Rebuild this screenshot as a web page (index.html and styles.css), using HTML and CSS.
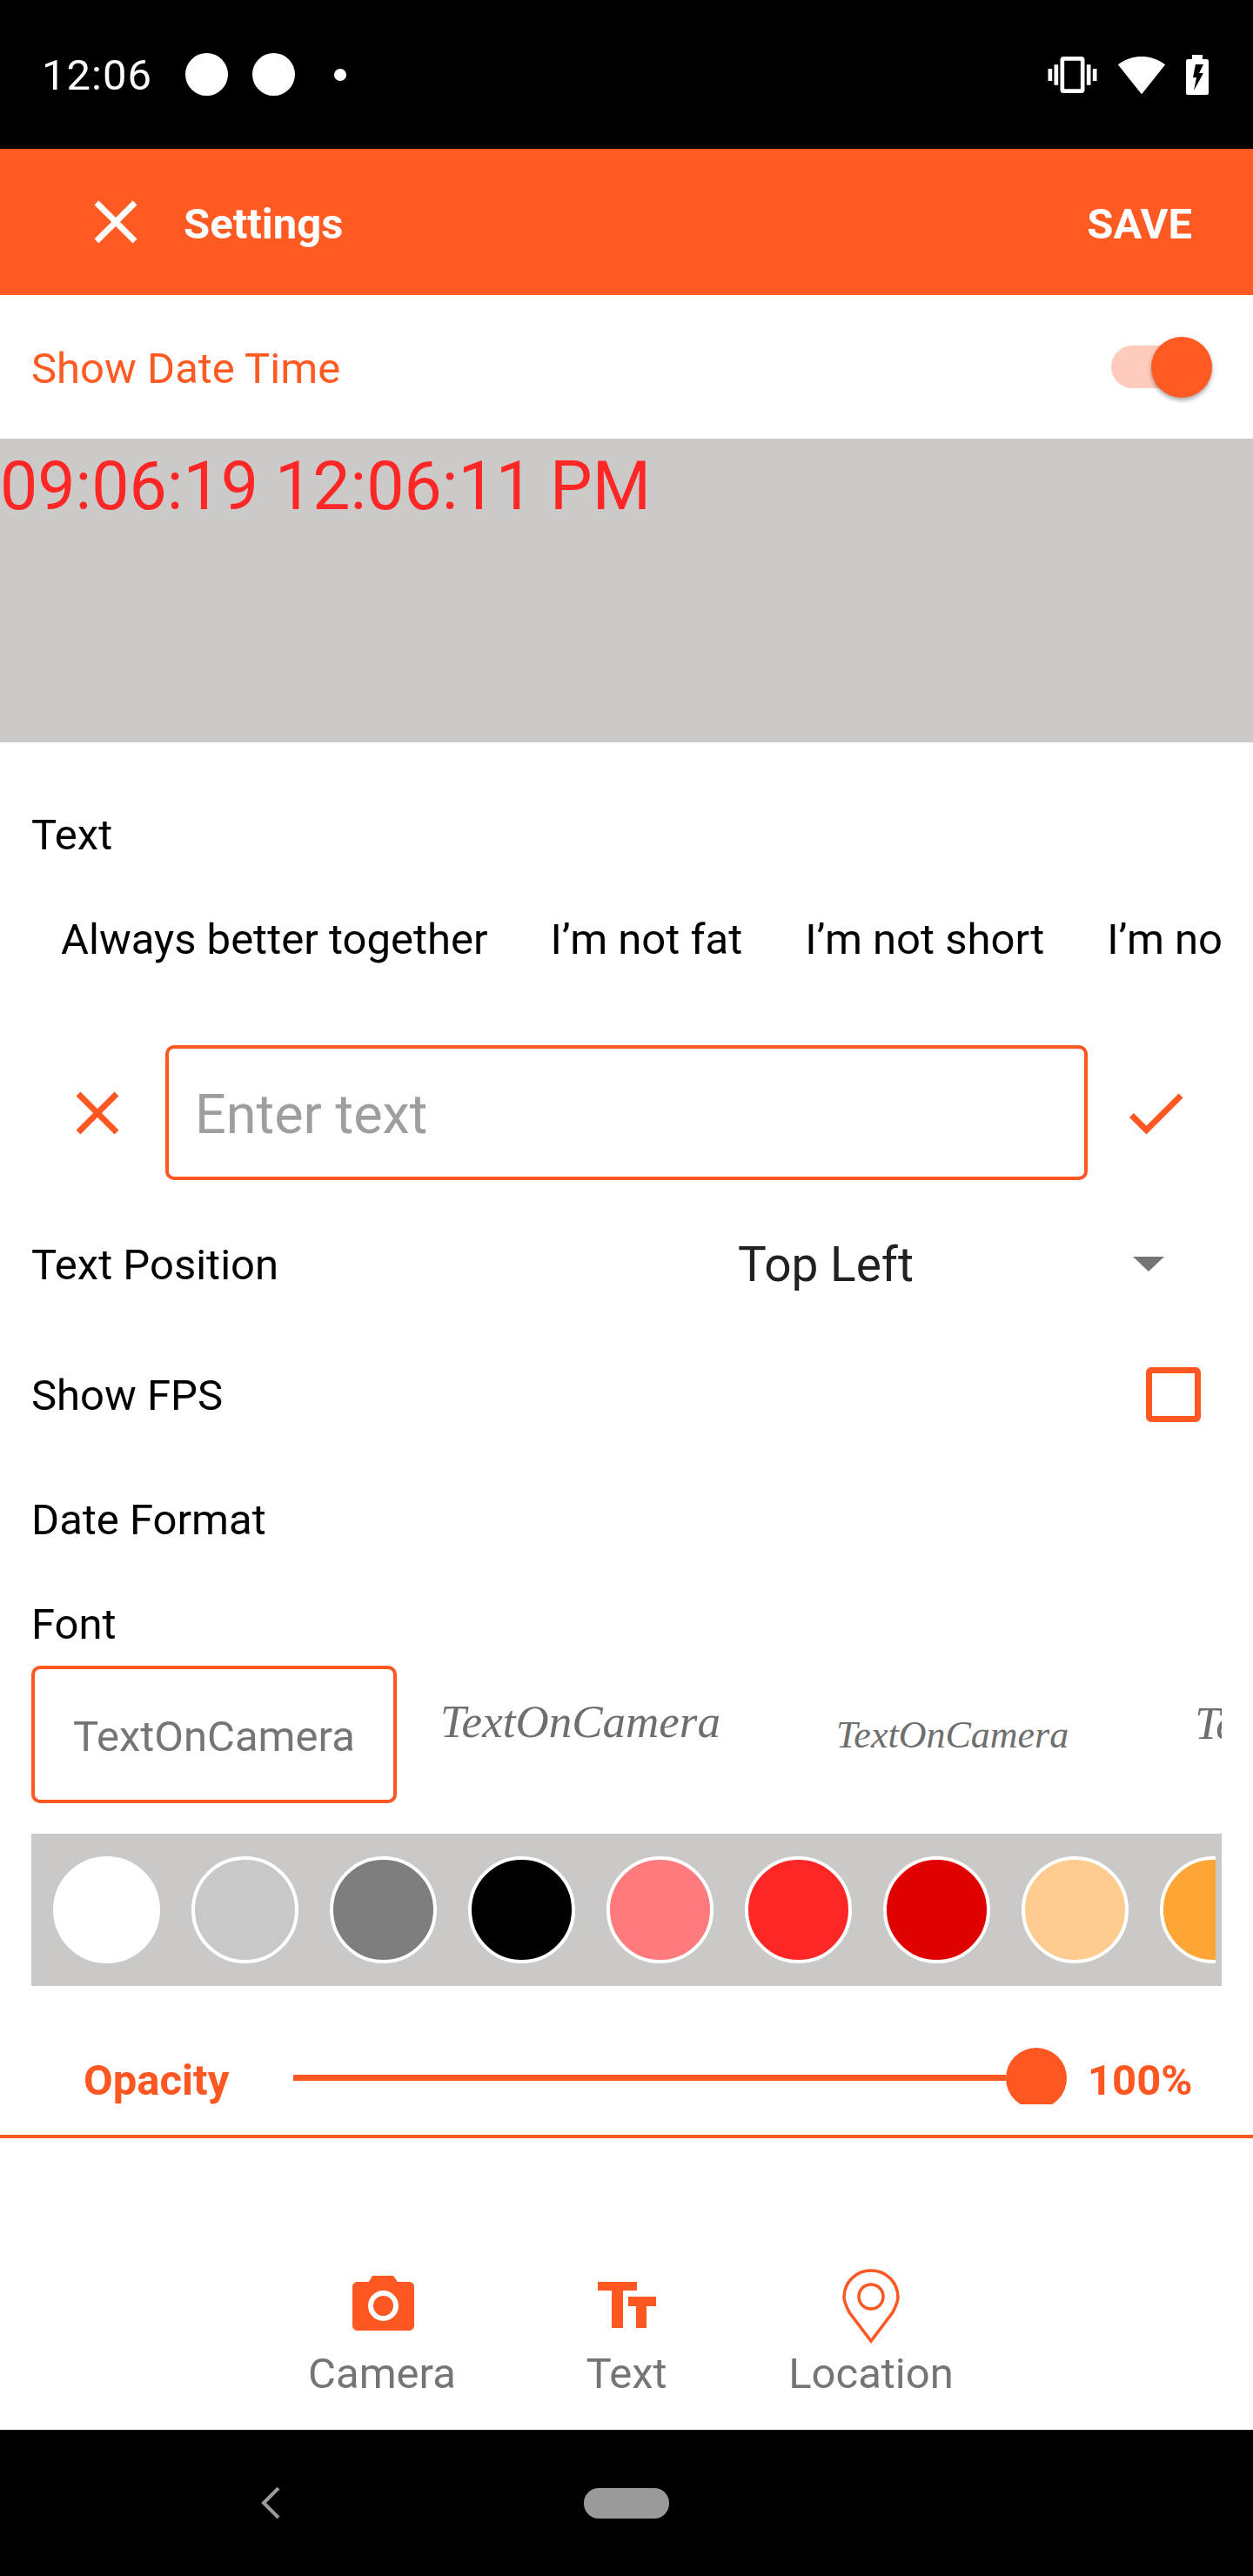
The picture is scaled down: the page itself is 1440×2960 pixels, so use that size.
FILE: index.html
```html
<!DOCTYPE html>
<html lang="en">

  <head>
    <meta charset="UTF-8">
    <meta name="viewport" content="width=device-width, initial-scale=1.0">
    <title>Settings</title>
    <link rel="stylesheet" href="styles.css">
  </head>

  <body>
    <div class="status-bar">
      <span class="clock">12:06</span>
      <span class="dot dot-first"></span>
      <span class="dot dot-second"></span>
      <span class="dot-small"></span>
      <div class="status-icons">
        <svg class="icon-vibrate" viewBox="0 0 24 24" fill="#fff"><path d="M0 15h2V9H0v6zm3 2h2V7H3v10zm19-8v6h2V9h-2zm-3 8h2V7h-2v10zM16.500 3h-9C6.670 3 6 3.670 6 4.500v15c0 .83.670 1.500 1.500 1.500h9c.83 0 1.500-.670 1.500-1.500v-15c0-.83-.670-1.500-1.500-1.500zM16 19H8V5h8v14z"/></svg>
        <svg class="icon-wifi" viewBox="0 0 24 24" fill="#fff"><path d="M12.010 21.490L23.640 7c-.45-.34-4.930-4-11.640-4C5.280 3 .81 6.660.36 7l11.630 14.490.01.01.01-.01z"/></svg>
        <svg class="icon-battery" viewBox="0 0 26 46" fill="#fff"><path fill-rule="evenodd" d="M7 0h12v5h5c1 0 2 1 2 2v37c0 1-1 2-2 2H2c-1 0-2-1-2-2V7c0-1 1-2 2-2h5zM11 11l-3 15h4l-3 15 11-20h-5l5-10z"/></svg>
      </div>
    </div>

    <div class="app-bar">
      <svg class="icon-close" viewBox="0 0 24 24" fill="#fff"><path d="M19 6.410L17.590 5 12 10.590 6.410 5 5 6.410 10.590 12 5 17.590 6.410 19 12 13.410 17.590 19 19 17.590 13.410 12z"/></svg>
      <span class="app-title">Settings</span>
      <span class="app-save">SAVE</span>
    </div>

    <div class="date-row">
      <span class="date-label">Show Date Time</span>
      <div class="switch"><span class="switch-thumb"></span></div>
    </div>

    <div class="preview">09:06:19 12:06:11 PM</div>

    <div class="form">
      <div class="field-label text-label">Text</div>
      <div class="chips">
        <span class="chip">Always better together</span>
        <span class="chip">I’m not fat</span>
        <span class="chip">I’m not short</span>
        <span class="chip">I’m not</span>
      </div>

      <div class="input-row">
        <svg class="icon-action" viewBox="0 0 24 24" fill="#ff5722"><path d="M19 6.410L17.590 5 12 10.590 6.410 5 5 6.410 10.590 12 5 17.590 6.410 19 12 13.410 17.590 19 19 17.590 13.410 12z"/></svg>
        <input class="text-input" type="text" placeholder="Enter text">
        <svg class="icon-action" viewBox="0 0 24 24" fill="#ff5722"><path d="M9 16.170L4.830 12l-1.420 1.410L9 19 21 7l-1.410-1.410z"/></svg>
      </div>

      <div class="position-row">
        <span class="row-label">Text Position</span>
        <div class="select">
          <span class="select-value">Top Left</span>
          <span class="select-arrow"></span>
        </div>
      </div>

      <div class="fps-row">
        <span class="row-label">Show FPS</span>
        <span class="checkbox"></span>
      </div>

      <div class="field-label date-format">Date Format</div>
      <div class="field-label font-label">Font</div>

      <div class="font-list">
        <div class="font-selected">TextOnCamera</div>
        <div class="font-option font-a">TextOnCamera</div>
        <div class="font-option font-b">TextOnCamera</div>
        <div class="font-option font-c">TextOnCamera</div>
      </div>

      <div class="color-bar">
        <div class="color-track">
          <span class="swatch swatch-white"></span>
          <span class="swatch swatch-silver"></span>
          <span class="swatch swatch-gray"></span>
          <span class="swatch swatch-black"></span>
          <span class="swatch swatch-pink"></span>
          <span class="swatch swatch-red"></span>
          <span class="swatch swatch-dark-red"></span>
          <span class="swatch swatch-peach"></span>
          <span class="swatch swatch-orange"></span>
        </div>
      </div>
    </div>

    <div class="opacity-row">
      <span class="opacity-label">Opacity</span>
      <div class="slider">
        <span class="slider-track"></span>
        <span class="slider-thumb"></span>
      </div>
      <span class="opacity-value">100%</span>
    </div>

    <div class="tabs">
      <div class="tab">
        <div class="tab-icon">
          <svg class="icon-camera" viewBox="0 0 71 63"><path fill="#ff5722" d="M23 0h24l5 7h13c3.500 0 6 2.500 6 6v44c0 3.500-2.500 6-6 6H6c-3.500 0-6-2.500-6-6V13c0-3.500 2.500-6 6-6h13z"/><circle cx="35.500" cy="34.500" r="14.500" fill="none" stroke="#fff" stroke-width="6"/></svg>
        </div>
        <span class="tab-label">Camera</span>
      </div>
      <div class="tab">
        <div class="tab-icon">
          <svg class="icon-text" viewBox="0 0 67 53" fill="#ff5722"><path d="M0 0h45v10H29v43H16V10H0z"/><path d="M35 17h32v11H56v25H44V28h-9z"/></svg>
        </div>
        <span class="tab-label">Text</span>
      </div>
      <div class="tab">
        <div class="tab-icon">
          <svg class="icon-pin" viewBox="0 0 66 86" fill="none" stroke="#ff5722" stroke-width="3.500"><path d="M33 83L8 50C4 42 2 38 2 33C2 15 16 2 33 2C50 2 64 15 64 33C64 38 62 42 58 50Z"/><circle cx="33" cy="32" r="14"/></svg>
        </div>
        <span class="tab-label">Location</span>
      </div>
    </div>

    <div class="nav-bar">
      <svg class="nav-back" viewBox="0 0 24 36" fill="none" stroke="#9a9a9a" stroke-width="4"><path d="M21 1L4 18l17 17"/></svg>
      <span class="nav-home"></span>
    </div>
  </body>

</html>
```

FILE: styles.css
```css
* {
  box-sizing: border-box;
}

body {
  margin: 0;
  width: 1440px;
  height: 2960px;
  overflow: hidden;
  background: white;
  font-family: Roboto, Arial, sans-serif;
  font-size: 49px;
  color: black;
}

svg {
  display: block;
  flex: none;
}

.status-bar {
  height: 171px;
  background: black;
  color: white;
  display: flex;
  align-items: center;
  padding: 0 51px 0 48px;
}

.clock {
  width: 165px;
  padding-top: 2px;
  letter-spacing: 1px;
}

.dot {
  width: 49px;
  height: 49px;
  border-radius: 50%;
  background: white;
}

.dot-second {
  margin-left: 28px;
}

.dot-small {
  width: 14px;
  height: 14px;
  margin-left: 45px;
  border-radius: 50%;
  background: white;
}

.status-icons {
  margin-left: auto;
  display: flex;
  align-items: center;
  gap: 23px;
}

.icon-vibrate {
  width: 57px;
  height: 56px;
}

.icon-wifi {
  width: 56px;
  height: 56px;
}

.icon-battery {
  width: 26px;
  height: 46px;
}

.app-bar {
  height: 168px;
  background: #ff5a22;
  color: white;
  font-weight: bold;
  display: flex;
  align-items: center;
  padding: 0 70px 0 91px;
}

.icon-close {
  width: 84px;
  height: 84px;
}

.app-title {
  margin-left: 36px;
  padding-top: 4px;
}

.app-save {
  margin-left: auto;
  padding-top: 4px;
}

.date-row {
  height: 165px;
  display: flex;
  align-items: center;
  justify-content: space-between;
  padding: 0 47px 0 36px;
}

.date-label {
  padding-top: 4px;
  color: #ff5a22;
}

.switch {
  position: relative;
  width: 116px;
  height: 49px;
  border-radius: 25px;
  background: #ffccbb;
}

.switch-thumb {
  position: absolute;
  right: 0;
  top: -10px;
  width: 70px;
  height: 70px;
  border-radius: 50%;
  background: #ff5a22;
  box-shadow: 0 3px 5px rgba(0, 0, 0, 0.35);
}

.preview {
  height: 349px;
  background: #cbcac8;
  color: #ff2626;
  font-size: 77px;
  line-height: 90px;
  padding-top: 10px;
}

.form {
  padding: 0 36px;
}

.field-label {
  line-height: 66px;
}

.row-label {
  padding-top: 2px;
}

.text-label {
  margin-top: 74px;
}

.chips {
  height: 130px;
  margin-top: 19px;
  padding: 4px 0 0 34px;
  display: flex;
  align-items: center;
  gap: 72px;
  overflow: hidden;
  white-space: nowrap;
}

.chip {
  flex: none;
}

.input-row {
  height: 155px;
  margin-top: 59px;
  padding-left: 34px;
  display: flex;
  align-items: center;
  gap: 36px;
}

.icon-action {
  width: 84px;
  height: 84px;
}

.text-input {
  width: 1060px;
  height: 155px;
  padding: 4px 30px 0;
  border: 4px solid #ff5722;
  border-radius: 10px;
  outline: none;
  font-family: Roboto, Arial, sans-serif;
  font-size: 63px;
}

.text-input::placeholder {
  color: #9e9e9e;
  opacity: 1;
}

.position-row {
  height: 100px;
  margin-top: 46px;
  display: flex;
  align-items: center;
  justify-content: space-between;
}

.select {
  width: 556px;
  padding-right: 66px;
  display: flex;
  align-items: center;
  justify-content: space-between;
}

.select-value {
  padding-top: 2px;
  font-size: 55px;
  color: #212121;
}

.select-arrow {
  width: 0;
  height: 0;
  border-left: 18px solid transparent;
  border-right: 18px solid transparent;
  border-top: 17px solid #757575;
}

.fps-row {
  height: 100px;
  margin-top: 50px;
  padding-right: 24px;
  display: flex;
  align-items: center;
  justify-content: space-between;
}

.checkbox {
  width: 63px;
  height: 63px;
  border: 7px solid #ff5722;
  border-radius: 6px;
}

.date-format {
  margin-top: 62px;
}

.font-label {
  margin-top: 54px;
}

.font-list {
  height: 158px;
  margin-top: 14px;
  display: flex;
  align-items: center;
  overflow: hidden;
  white-space: nowrap;
}

.font-selected {
  flex: none;
  width: 420px;
  height: 158px;
  padding-top: 4px;
  border: 4px solid #ff5722;
  border-radius: 10px;
  color: #757575;
  display: flex;
  align-items: center;
  justify-content: center;
}

.font-option {
  flex: none;
  color: #6e6e6e;
  font-family: "Liberation Serif", serif;
  font-style: italic;
}

.font-a {
  margin-left: 50px;
  padding-bottom: 30px;
  font-size: 53px;
}

.font-b {
  margin-left: 133px;
  font-size: 44px;
}

.font-c {
  margin-left: 145px;
  padding-bottom: 26px;
  font-size: 52px;
}

.color-bar {
  height: 175px;
  margin-top: 35px;
  padding: 0 7px 0 25px;
  background: #cac9c7;
  display: flex;
  align-items: center;
}

.color-track {
  flex: 1;
  display: flex;
  gap: 36px;
  overflow: hidden;
}

.swatch {
  flex: none;
  width: 123px;
  height: 123px;
  border: 4px solid white;
  border-radius: 50%;
}

.swatch-white { background: white; }
.swatch-silver { background: #c8c8c8; }
.swatch-gray { background: #7e7e7e; }
.swatch-black { background: black; }
.swatch-pink { background: #ff7a7d; }
.swatch-red { background: #ff2626; }
.swatch-dark-red { background: #e00000; }
.swatch-peach { background: #ffcc90; }
.swatch-orange { background: #ffa536; }

.opacity-row {
  height: 175px;
  padding-left: 96px;
  border-bottom: 4px solid #ff5722;
  display: flex;
  align-items: flex-start;
  color: #ff5722;
  font-weight: bold;
  line-height: 66px;
}

.opacity-label {
  width: 241px;
  margin-top: 76px;
}

.slider {
  width: 889px;
  height: 65px;
  margin-top: 71px;
  display: flex;
  align-items: flex-start;
  overflow: hidden;
}

.slider-track {
  flex: 1;
  height: 7px;
  margin-top: 31px;
  background: #ff5722;
}

.slider-thumb {
  flex: none;
  width: 70px;
  height: 70px;
  border-radius: 50%;
  background: #ff5722;
}

.opacity-value {
  margin: 76px 0 0 24px;
}

.tabs {
  height: 335px;
  padding-top: 150px;
  display: flex;
  justify-content: center;
}

.tab {
  width: 281px;
  display: flex;
  flex-direction: column;
  align-items: center;
  color: #757575;
}

.tab-icon {
  height: 86px;
  display: flex;
  align-items: center;
}

.tab-label {
  margin-top: 2px;
  line-height: 66px;
}

.icon-camera {
  width: 71px;
  height: 63px;
  margin: 0 0 7px 3px;
}

.icon-text {
  width: 67px;
  height: 53px;
  margin: 0 0 4px 0;
}

.icon-pin {
  width: 66px;
  height: 86px;
}

.nav-bar {
  height: 168px;
  background: black;
  display: flex;
  align-items: center;
  padding-left: 299px;
}

.nav-back {
  width: 24px;
  height: 36px;
}

.nav-home {
  width: 98px;
  height: 35px;
  margin-left: 348px;
  border-radius: 17px;
  background: #9a9a9a;
}
```
